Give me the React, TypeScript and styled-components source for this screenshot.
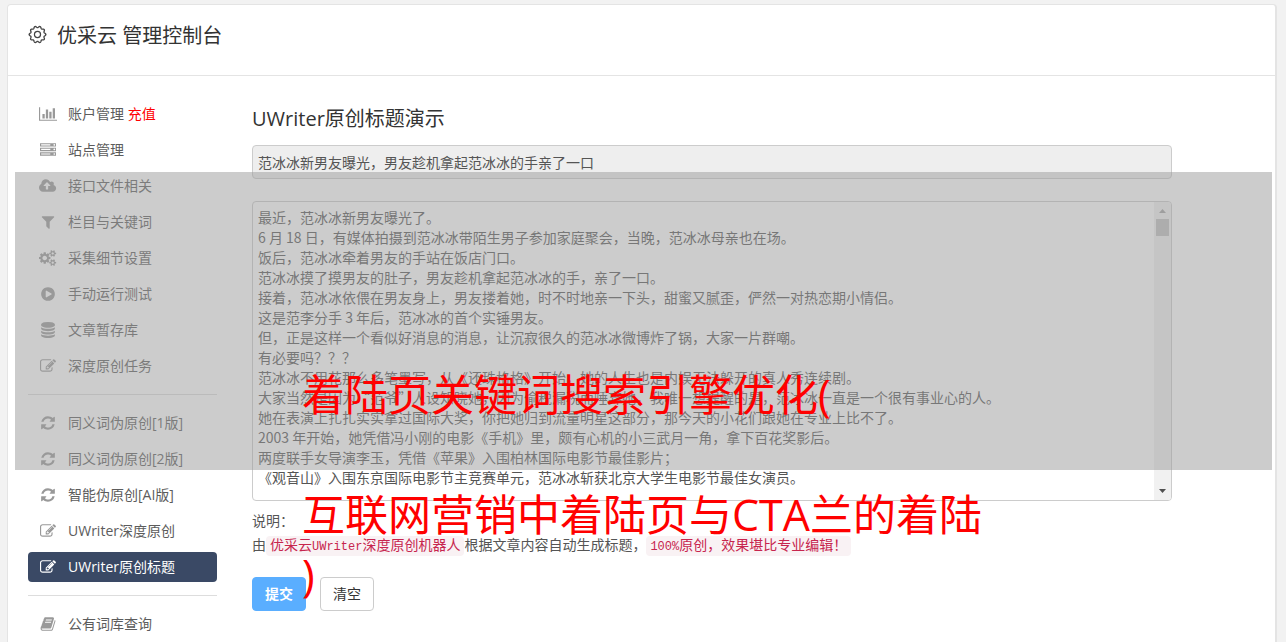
import React from "react";
import styled, { createGlobalStyle, css } from "styled-components";

const GlobalStyle = createGlobalStyle`
  *, *::before, *::after { box-sizing: border-box; }
  body {
    margin: 0;
    background: #f2f2f2;
    color: #555;
    font-family: "Open Sans", "Noto Sans CJK SC", sans-serif;
    font-size: 14px;
    line-height: 20px;
    text-spacing-trim: space-all;
    overflow: hidden;
  }
  button, input, textarea { font: inherit; color: inherit; }
  h1, h2, p, ul { margin: 0; padding: 0; font-weight: 400; }
`;

const Page = styled.div`
  padding: 4px 9px 0 7px;
  height: 100vh;
  overflow: hidden;
`;

const Card = styled.main`
  background: #fff;
  border: 1px solid #e4e4e4;
  border-right-width: 2px;
  border-radius: 4px;
  min-height: 110vh;
`;

const Header = styled.header`
  display: flex;
  align-items: flex-start;
  gap: 10px;
  height: 71px;
  padding: 16px 20px;
  border-bottom: 1px solid #e4e4e4;
`;

const Title = styled.h1`
  color: #333;
  font-size: 20px;
  line-height: 30px;
`;

const GearSvg = styled.svg`
  width: 19px;
  height: 19px;
  margin-top: 4px;
  fill: none;
  stroke: #444;
`;

const Body = styled.div`
  display: flex;
  gap: 35px;
  padding: 23px 103px 0 20px;
`;

const Nav = styled.nav`
  flex: none;
  width: 189px;
  display: flex;
  flex-direction: column;
  gap: 13px;
`;

const NavGroup = styled.ul`
  list-style: none;
  display: flex;
  flex-direction: column;
  gap: 6px;
`;

const Divider = styled.hr`
  width: 100%;
  margin: 0;
  border: 0;
  border-top: 1px solid #ddd;
`;

const NavLink = styled.a<{ $active?: boolean }>`
  display: flex;
  align-items: center;
  gap: 10px;
  height: 30px;
  padding: 0 10px;
  border-radius: 4px;
  color: #5c5c5c;
  text-decoration: none;
  white-space: nowrap;
  ${(p) => p.$active && css`
    background: #3a4965;
    color: #fff;
  `}
`;

const IconBox = styled.span<{ $active?: boolean }>`
  display: flex;
  justify-content: center;
  width: 20px;
  color: ${(p) => (p.$active ? "#fff" : "#999")};
  svg { height: 16px; width: auto; fill: currentColor; }
`;

const Recharge = styled.span`
  color: #f00;
`;

const Content = styled.section`
  flex: 1;
  min-width: 0;
  padding-top: 5px;
`;

const Form = styled.form`
  display: flex;
  flex-direction: column;
`;

const Heading = styled.h2`
  color: #333;
  font-size: 20px;
  line-height: 30px;
  margin-bottom: 11px;
`;

const TitleInput = styled.input`
  width: 100%;
  height: 34px;
  padding: 0 5px;
  border: 1px solid #ccc;
  border-radius: 4px;
  background: #eee;
  margin-bottom: 22px;
`;

const Editor = styled.div`
  display: flex;
  height: 300px;
  border: 1px solid #ccc;
  border-radius: 4px;
  background: #fff;
  overflow: hidden;
  margin-bottom: 8px;
`;

/* The CJK family comes first so that curly quotes take a full em. */
const ArticleText = styled.textarea`
  flex: 1;
  min-width: 0;
  padding: 5px;
  border: 0;
  outline: 0;
  resize: none;
  overflow: hidden;
  background: transparent;
  font-family: "Noto Sans CJK SC", "Open Sans", sans-serif;
  line-height: 20px;
`;

const ScrollTrack = styled.div`
  display: flex;
  flex-direction: column;
  align-items: center;
  width: 17px;
  background: #f1f1f1;
`;

const ScrollArrow = styled.svg<{ $muted?: boolean }>`
  width: 17px;
  height: 17px;
  fill: ${(p) => (p.$muted ? "#a3a3a3" : "#505050")};
`;

const ScrollThumb = styled.div`
  width: 13px;
  height: 17px;
  background: #c1c1c1;
  margin-bottom: auto;
`;

const Note = styled.p`
  line-height: 24px;
`;

const Chip = styled.code`
  padding: 2px 4px;
  border-radius: 4px;
  background: #f9f2f4;
  color: #c7254e;
  font-family: "Liberation Mono", "Noto Sans CJK SC", monospace;
  font-size: 14px;
  line-height: 16px;
`;

const ChipLatin = styled.span`
  font-size: 12px;
`;

const Actions = styled.div`
  display: flex;
  gap: 14px;
  margin-top: 20px;
`;

const Button = styled.button<{ $primary?: boolean }>`
  width: 54px;
  height: 34px;
  padding: 0;
  border: 1px solid ${(p) => (p.$primary ? "#5aaeff" : "#ccc")};
  border-radius: 4px;
  background: ${(p) => (p.$primary ? "#5aaeff" : "#fff")};
  color: ${(p) => (p.$primary ? "#fff" : "#333")};
  font-weight: ${(p) => (p.$primary ? 700 : 400)};
`;

const Band = styled.div`
  position: absolute;
  top: 172px;
  left: 15px;
  right: 14px;
  height: 298px;
  background: rgba(153, 153, 153, 0.5);
  pointer-events: none;
`;

const Caption = styled.div`
  position: absolute;
  top: 365px;
  left: 302px;
  width: 690px;
  color: #f00;
  font-size: 43px;
  line-height: 60px;
  white-space: pre;
  pointer-events: none;
`;

const icons: Record<string, { w?: number; d: string }> = {
  chart: { w: 2048, d: "M640 896v512h-256v-512h256zm384-512v1024h-256v-1024h256zm1024 1152v128h-2048v-1536h128v1408h1920zm-640-896v768h-256v-768h256zm384-384v1152h-256v-1152h256z" },
  server: { d: "M128 1408h1024v-128h-1024v128zm0-512h1024v-128h-1024v128zm1568 448q0-40-28-68t-68-28-68 28-28 68 28 68 68 28 68-28 28-68zm-1568-960h1024v-128h-1024v128zm1568 448q0-40-28-68t-68-28-68 28-28 68 28 68 68 28 68-28 28-68zm0-512q0-40-28-68t-68-28-68 28-28 68 28 68 68 28 68-28 28-68zm96 832v384h-1792v-384h1792zm0-512v384h-1792v-384h1792zm0-512v384h-1792v-384h1792z" },
  upload: { w: 1920, d: "M1280 864q0-14-9-23l-352-352q-9-9-23-9t-23 9l-351 351q-10 12-10 24 0 14 9 23t23 9h224v352q0 13 9.5 22.5t22.5 9.5h192q13 0 22.5-9.5t9.5-22.5v-352h224q13 0 22.5-9.5t9.5-22.5zm640 288q0 159-112.5 271.5t-271.5 112.5h-1088q-185 0-316.5-131.5t-131.5-316.5q0-130 70-240t188-165q-2-30-2-43 0-212 150-362t362-150q156 0 285.5 87t188.5 231q71-62 166-62 106 0 181 75t75 181q0 76-41 138 130 31 213.5 135.5t83.5 238.5z" },
  filter: { d: "M1595 295q17 41-14 70l-493 493v742q0 42-39 59-13 5-25 5-27 0-45-19l-256-256q-19-19-19-45v-486l-493-493q-31-29-14-70 17-39 59-39h1280q42 0 59 39z" },
  cogs: { w: 1920, d: "M896 896q0-106-75-181t-181-75-181 75-75 181 75 181 181 75 181-75 75-181zm768 512q0-52-38-90t-90-38-90 38-38 90q0 53 37.5 90.5t90.5 37.5 90.5-37.5 37.5-90.5zm0-1024q0-52-38-90t-90-38-90 38-38 90q0 53 37.5 90.5t90.5 37.5 90.5-37.5 37.5-90.5zm-384 421v185q0 10-7 19.5t-16 10.5l-155 24q-11 35-32 76 34 48 90 115 7 11 7 20 0 12-7 19-23 30-82.5 89.5t-78.5 59.5q-11 0-21-7l-115-90q-37 19-77 31-11 108-23 155-7 24-30 24h-186q-11 0-20-7.5t-10-17.5l-23-153q-34-10-75-31l-118 89q-7 7-20 7-11 0-21-8-144-133-144-160 0-9 7-19 10-14 41-53t47-61q-23-44-35-82l-152-24q-10-1-17-9.5t-7-19.5v-185q0-10 7-19.5t16-10.5l155-24q11-35 32-76-34-48-90-115-7-11-7-20 0-12 7-20 22-30 82-89t79-59q11 0 21 7l115 90q34-18 77-32 11-108 23-154 7-24 30-24h186q11 0 20 7.5t10 17.5l23 153q34 10 75 31l118-89q8-7 20-7 11 0 21 8 144 133 144 160 0 8-7 19-12 16-42 54t-45 60q23 48 34 82l152 23q10 2 17 10.5t7 19.5zm640 533v140q0 16-149 31-12 27-30 52 51 113 51 138 0 4-4 7-122 71-124 71-8 0-46-47t-52-68q-20 2-30 2t-30-2q-14 21-52 68t-46 47q-2 0-124-71-4-3-4-7 0-25 51-138-18-25-30-52-149-15-149-31v-140q0-16 149-31 13-29 30-52-51-113-51-138 0-4 4-7 4-2 35-20t59-34 30-16q8 0 46 46.5t52 67.5q20-2 30-2t30 2q51-71 92-112l6-2q4 0 124 70 4 3 4 7 0 25-51 138 17 23 30 52 149 15 149 31zm0-1024v140q0 16-149 31-12 27-30 52 51 113 51 138 0 4-4 7-122 71-124 71-8 0-46-47t-52-68q-20 2-30 2t-30-2q-14 21-52 68t-46 47q-2 0-124-71-4-3-4-7 0-25 51-138-18-25-30-52-149-15-149-31v-140q0-16 149-31 13-29 30-52-51-113-51-138 0-4 4-7 4-2 35-20t59-34 30-16q8 0 46 46.5t52 67.5q20-2 30-2t30 2q51-71 92-112l6-2q4 0 124 70 4 3 4 7 0 25-51 138 17 23 30 52 149 15 149 31z" },
  play: { d: "M896 128q209 0 385.5 103t279.5 279.5 103 385.5-103 385.5-279.5 279.5-385.5 103-385.5-103-279.5-279.5-103-385.5 103-385.5 279.5-279.5 385.5-103zm384 823q32-18 32-55t-32-55l-544-320q-31-19-64-1-32 19-32 56v640q0 37 32 56 16 8 32 8 17 0 32-9z" },
  database: { d: "M896 768q237 0 443-43t325-127v170q0 69-103 128t-280 93.5-385 34.5-385-34.5-280-93.5-103-128v-170q119 84 325 127t443 43zm0 768q237 0 443-43t325-127v170q0 69-103 128t-280 93.5-385 34.5-385-34.5-280-93.5-103-128v-170q119 84 325 127t443 43zm0-384q237 0 443-43t325-127v170q0 69-103 128t-280 93.5-385 34.5-385-34.5-280-93.5-103-128v-170q119 84 325 127t443 43zm0-1152q208 0 385 34.5t280 93.5 103 128v128q0 69-103 128t-280 93.5-385 34.5-385-34.5-280-93.5-103-128v-128q0-69 103-128t280-93.5 385-34.5z" },
  edit: { d: "M888 1184l116-116-152-152-116 116v56h96v96h56zm440-720q-16-16-33 1l-350 350q-17 17-1 33t33-1l350-350q17-17 1-33zm80 594v190q0 119-84.5 203.5t-203.5 84.5h-832q-119 0-203.5-84.5t-84.5-203.5v-832q0-119 84.5-203.5t203.5-84.5h832q63 0 117 25 15 7 18 23 3 17-9 29l-49 49q-14 14-32 8-23-6-45-6h-832q-66 0-113 47t-47 113v832q0 66 47 113t113 47h832q66 0 113-47t47-113v-126q0-13 9-22l64-64q15-15 35-7t20 29zm-96-738l288 288-672 672h-288v-288zm444 132l-92 92-288-288 92-92q28-28 68-28t68 28l152 152q28 28 28 68t-28 68z" },
  refresh: { d: "M1639 1056q0 5-1 7-64 268-268 434.5t-478 166.5q-146 0-282.5-55t-243.5-157l-129 129q-19 19-45 19t-45-19-19-45v-448q0-26 19-45t45-19h448q26 0 45 19t19 45-19 45l-137 137q71 66 161 102t187 36q134 0 250-65t186-179q11-17 53-117 8-23 30-23h192q13 0 22.5 9.5t9.5 22.5zm25-800v448q0 26-19 45t-45 19h-448q-26 0-45-19t-19-45 19-45l138-138q-148-137-349-137-134 0-250 65t-186 179q-11 17-53 117-8 23-30 23h-199q-13 0-22.5-9.5t-9.5-22.5v-7q65-268 270-434.5t480-166.5q146 0 284 55.5t245 156.5l130-129q19-19 45-19t45 19 19 45z" },
  book: { d: "M1703 478q40 57 18 129l-275 906q-19 64-76.5 107.5t-122.5 43.5h-923q-77 0-148.5-53.5t-99.5-131.5q-24-67-2-127 0-4 3-27t4-37q1-8-3-21.5t-3-19.5q2-11 8-21t16.5-23.5 16.5-23.5q23-38 45-91.5t30-91.5q3-10 .5-30t-.5-28q3-11 17-28t17-23q21-36 42-92t25-90q1-9-2.5-32t.5-28q4-13 22-30.5t22-22.5q19-26 42.5-84.5t27.5-96.5q1-8-3-25.5t-2-26.5q2-8 9-18t18-23 17-21q8-12 16.5-30.5t15-35 16-36 19.5-32 26.5-23.5 36-11.5 47.5 5.5l-1 3q38-9 51-9h761q74 0 114 56t18 130l-274 906q-36 119-71.5 153.5t-128.5 34.5h-869q-27 0-38 15-11 16-1 43 24 70 144 70h923q29 0 56-15.5t35-41.5l300-987q7-22 5-57 38 15 59 43zm-1064 2q-4 13 2 22.5t20 9.5h608q13 0 25.5-9.5t16.5-22.5l21-64q4-13-2-22.5t-20-9.5h-608q-13 0-25.5 9.5t-16.5 22.5zm-83 256q-4 13 2 22.5t20 9.5h608q13 0 25.5-9.5t16.5-22.5l21-64q4-13-2-22.5t-20-9.5h-608q-13 0-25.5 9.5t-16.5 22.5z" },
};

function NavIcon({ name }: { name: string }) {
  const icon = icons[name];
  return (
    <svg viewBox={`0 0 ${icon.w ?? 1792} 1792`} aria-hidden>
      <path d={icon.d} />
    </svg>
  );
}

type Item = { icon: string; label: string; extra?: string; active?: boolean };

const groups: Item[][] = [
  [
    { icon: "chart", label: "账户管理", extra: "充值" },
    { icon: "server", label: "站点管理" },
    { icon: "upload", label: "接口文件相关" },
    { icon: "filter", label: "栏目与关键词" },
    { icon: "cogs", label: "采集细节设置" },
    { icon: "play", label: "手动运行测试" },
    { icon: "database", label: "文章暂存库" },
    { icon: "edit", label: "深度原创任务" },
  ],
  [
    { icon: "refresh", label: "同义词伪原创[1版]" },
    { icon: "refresh", label: "同义词伪原创[2版]" },
    { icon: "refresh", label: "智能伪原创[AI版]" },
    { icon: "edit", label: "UWriter深度原创" },
    { icon: "edit", label: "UWriter原创标题", active: true },
  ],
  [{ icon: "book", label: "公有词库查询" }],
];

const article = `最近，范冰冰新男友曝光了。
6 月 18 日，有媒体拍摄到范冰冰带陌生男子参加家庭聚会，当晚，范冰冰母亲也在场。
饭后，范冰冰牵着男友的手站在饭店门口。
范冰冰摸了摸男友的肚子，男友趁机拿起范冰冰的手，亲了一口。
接着，范冰冰依偎在男友身上，男友搂着她，时不时地亲一下头，甜蜜又腻歪，俨然一对热恋期小情侣。
这是范李分手 3 年后，范冰冰的首个实锤男友。
但，正是这样一个看似好消息的消息，让沉寂很久的范冰冰微博炸了锅，大家一片群嘲。
有必要吗？？？
范冰冰不用花那么多笔墨写，从《还珠格格》开始，她的人生也是内娱无法躲开的真人秀连续剧。
大家当然是因为“范爷”人设知晓她，因为偷税漏税而唾弃她，我唯一想提醒的是，范冰冰一直是一个很有事业心的人。
她在表演上扎扎实实拿过国际大奖，你把她归到流量明星这部分，那今天的小花们跟她在专业上比不了。
2003 年开始，她凭借冯小刚的电影《手机》里，颇有心机的小三武月一角，拿下百花奖影后。
两度联手女导演李玉，凭借《苹果》入围柏林国际电影节最佳影片；
《观音山》入围东京国际电影节主竞赛单元，范冰冰斩获北京大学生电影节最佳女演员。`;

function GearIcon() {
  const points = Array.from({ length: 120 }, (_, i) => {
    const a = (i / 120) * Math.PI * 2;
    const r = 8 + 0.8 * Math.cos(a * 10);
    return `${(10 + r * Math.cos(a)).toFixed(2)},${(10 + r * Math.sin(a)).toFixed(2)}`;
  }).join(" ");
  return (
    <GearSvg viewBox="0 0 20 20" aria-hidden>
      <polygon points={points} strokeWidth="1.4" />
      <circle cx="10" cy="10" r="3.2" strokeWidth="1.3" />
    </GearSvg>
  );
}

export default function App() {
  return (
    <>
      <GlobalStyle />
      <Page>
        <Card>
          <Header>
            <GearIcon />
            <Title>优采云 管理控制台</Title>
          </Header>
          <Body>
            <Nav>
              {groups.map((items, g) => (
                <React.Fragment key={g}>
                  {g > 0 && <Divider />}
                  <NavGroup>
                    {items.map((item) => (
                      <li key={item.label}>
                        <NavLink href="#" $active={item.active}>
                          <IconBox $active={item.active}>
                            <NavIcon name={item.icon} />
                          </IconBox>
                          <span>
                            {item.label}
                            {item.extra && <> <Recharge>{item.extra}</Recharge></>}
                          </span>
                        </NavLink>
                      </li>
                    ))}
                  </NavGroup>
                </React.Fragment>
              ))}
            </Nav>
            <Content>
              <Form onSubmit={(e) => e.preventDefault()}>
                <Heading>UWriter原创标题演示</Heading>
                <TitleInput
                  aria-label="标题"
                  readOnly
                  defaultValue="范冰冰新男友曝光，男友趁机拿起范冰冰的手亲了一口"
                />
                <Editor>
                  <ArticleText aria-label="文章内容" spellCheck={false} defaultValue={article} />
                  <ScrollTrack aria-hidden>
                    <ScrollArrow $muted viewBox="0 0 17 17">
                      <path d="M5 11h7L8.500 7z" />
                    </ScrollArrow>
                    <ScrollThumb />
                    <ScrollArrow viewBox="0 0 17 17">
                      <path d="M5 6h7L8.500 10z" />
                    </ScrollArrow>
                  </ScrollTrack>
                </Editor>
                <Note>说明：</Note>
                <Note>
                  由<Chip>优采云<ChipLatin>UWriter</ChipLatin>深度原创机器人</Chip>根据文章内容自动生成标题，
                  <Chip><ChipLatin>100%</ChipLatin>原创，效果堪比专业编辑！</Chip>
                </Note>
                <Actions>
                  <Button type="submit" $primary>提交</Button>
                  <Button type="reset">清空</Button>
                </Actions>
              </Form>
            </Content>
          </Body>
        </Card>
      </Page>
      <Band />
      <Caption>{"着陆页关键词搜索引擎优化(\n\n互联网营销中着陆页与CTA兰的着陆\n)"}</Caption>
    </>
  );
}
